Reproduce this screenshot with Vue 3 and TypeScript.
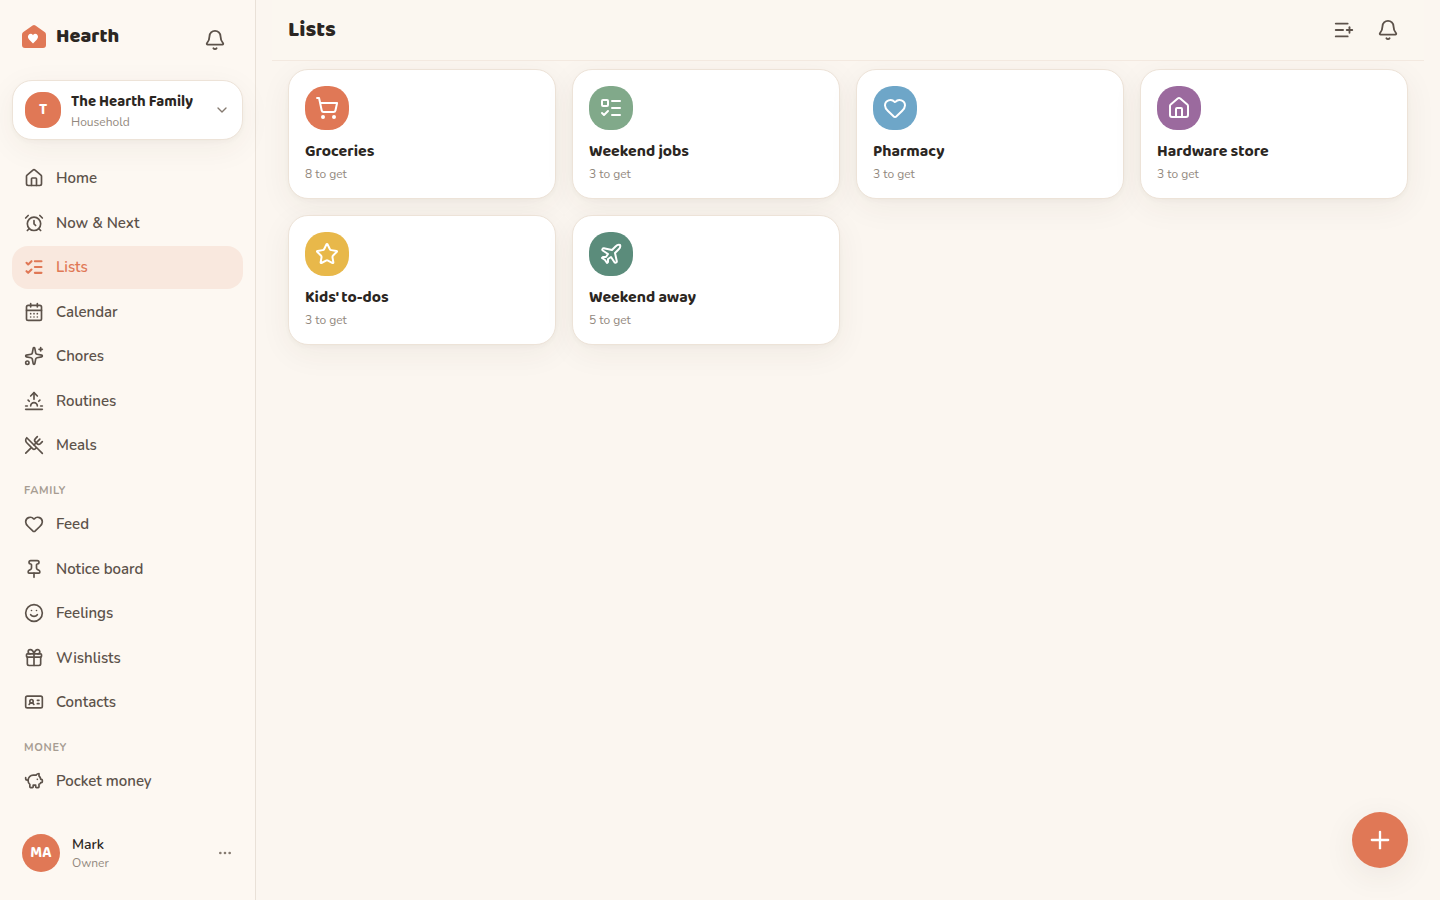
<script setup lang="ts">
import { h, type FunctionalComponent } from 'vue'

type Shape = string | { circle: [number, number, number] } | { rect: [number, number, number, number, number] }

const HEART =
  'M2 9.5a5.5 5.5 0 0 1 9.591-3.676.56.56 0 0 0 .818 0A5.49 5.49 0 0 1 22 9.5c0 2.29-1.5 4-3 5.5l-5.492 5.313a2 2 0 0 1-3 .019L5 15c-1.5-1.5-3-3.2-3-5.5'

const icons: Record<string, Shape[]> = {
  home: [
    'M15 21v-8a1 1 0 0 0-1-1h-4a1 1 0 0 0-1 1v8',
    'M3 10a2 2 0 0 1 .709-1.528l7-6a2 2 0 0 1 2.582 0l7 6A2 2 0 0 1 21 10v9a2 2 0 0 1-2 2H5a2 2 0 0 1-2-2z',
  ],
  alarm: [
    { circle: [12, 13, 8] },
    'M12 9v4l2 2',
    'M5 3 2 6',
    'm22 6-3-3',
    'M6.38 18.7 4 21',
    'M17.64 18.67 20 21',
  ],
  checks: ['M13 5h8', 'M13 12h8', 'M13 19h8', 'm3 17 2 2 4-4', 'm3 7 2 2 4-4'],
  todo: ['M13 5h8', 'M13 12h8', 'M13 19h8', 'm3 17 2 2 4-4', { rect: [3, 4, 6, 6, 1] }],
  calendar: [
    'M8 2v4',
    'M16 2v4',
    { rect: [3, 4, 18, 18, 2] },
    'M3 10h18',
    'M8 14h.01',
    'M12 14h.01',
    'M16 14h.01',
    'M8 18h.01',
    'M12 18h.01',
    'M16 18h.01',
  ],
  sparkles: [
    'M11.017 2.814a1 1 0 0 1 1.966 0l1.051 5.558a2 2 0 0 0 1.594 1.594l5.558 1.051a1 1 0 0 1 0 1.966l-5.558 1.051a2 2 0 0 0-1.594 1.594l-1.051 5.558a1 1 0 0 1-1.966 0l-1.051-5.558a2 2 0 0 0-1.594-1.594l-5.558-1.051a1 1 0 0 1 0-1.966l5.558-1.051a2 2 0 0 0 1.594-1.594z',
    'M20 2v4',
    'M22 4h-4',
    { circle: [4, 20, 2] },
  ],
  sunrise: [
    'M12 2v8',
    'm4.93 10.93 1.41 1.41',
    'M2 18h2',
    'M20 18h2',
    'm19.07 10.93-1.41 1.41',
    'M22 22H2',
    'm8 6 4-4 4 4',
    'M16 18a4 4 0 0 0-8 0',
  ],
  utensils: [
    'm16 2-2.3 2.3a3 3 0 0 0 0 4.2l1.8 1.8a3 3 0 0 0 4.2 0L22 8',
    'M15 15 3.3 3.3a4.2 4.2 0 0 0 0 6l7.3 7.3c.7.7 2 .7 2.8 0L15 15Zm0 0 7 7',
    'm2.1 21.8 6.4-6.3',
    'm19 5-7 7',
  ],
  heart: [HEART],
  pin: [
    'M12 17v5',
    'M9 10.76a2 2 0 0 1-1.11 1.79l-1.78.9A2 2 0 0 0 5 15.24V16a1 1 0 0 0 1 1h12a1 1 0 0 0 1-1v-.76a2 2 0 0 0-1.11-1.79l-1.78-.9A2 2 0 0 1 15 10.76V7a1 1 0 0 1 1-1 2 2 0 0 0 0-4H8a2 2 0 0 0 0 4 1 1 0 0 1 1 1z',
  ],
  smile: [{ circle: [12, 12, 10] }, 'M8 14s1.5 2 4 2 4-2 4-2', 'M9 9h.01', 'M15 9h.01'],
  gift: [
    'M12 7v14',
    'M20 11v8a2 2 0 0 1-2 2H6a2 2 0 0 1-2-2v-8',
    'M7.5 7a1 1 0 0 1 0-5A4.8 8 0 0 1 12 7a4.8 8 0 0 1 4.5-5 1 1 0 0 1 0 5',
    { rect: [3, 7, 18, 4, 1] },
  ],
  idCard: [
    'M16 10h2',
    'M16 14h2',
    'M6.17 15a3 3 0 0 1 5.66 0',
    { circle: [9, 11, 2] },
    { rect: [2, 5, 20, 14, 2] },
  ],
  piggy: [
    'M11 17h3v2a1 1 0 0 0 1 1h2a1 1 0 0 0 1-1v-3a3.16 3.16 0 0 0 2-2h1a1 1 0 0 0 1-1v-2a1 1 0 0 0-1-1h-1a5 5 0 0 0-2-4V3a4 4 0 0 0-3.2 1.6l-.3.4H11a6 6 0 0 0-6 6v1a5 5 0 0 0 2 4v3a1 1 0 0 0 1 1h2a1 1 0 0 0 1-1z',
    'M16 10h.01',
    'M2 8v1a2 2 0 0 0 2 2h1',
  ],
  bell: [
    'M10.268 21a2 2 0 0 0 3.464 0',
    'M3.262 15.326A1 1 0 0 0 4 17h16a1 1 0 0 0 .74-1.673C19.41 13.956 18 12.499 18 8A6 6 0 0 0 6 8c0 4.499-1.411 5.956-2.738 7.326',
  ],
  listPlus: ['M16 5H3', 'M11 12H3', 'M16 19H3', 'M18 9v6', 'M21 12h-6'],
  chevron: ['m6 9 6 6 6-6'],
  dots: [{ circle: [5, 12, 1] }, { circle: [12, 12, 1] }, { circle: [19, 12, 1] }],
  plus: ['M5 12h14', 'M12 5v14'],
  cart: [
    { circle: [8, 21, 1] },
    { circle: [19, 21, 1] },
    'M2.05 2.05h2l2.66 12.42a2 2 0 0 0 2 1.58h9.78a2 2 0 0 0 1.95-1.57l1.65-7.43H5.12',
  ],
  star: [
    'M11.525 2.295a.53.53 0 0 1 .95 0l2.31 4.679a2.123 2.123 0 0 0 1.595 1.16l5.166.756a.53.53 0 0 1 .294.904l-3.736 3.638a2.123 2.123 0 0 0-.611 1.878l.882 5.14a.53.53 0 0 1-.771.56l-4.618-2.428a2.122 2.122 0 0 0-1.973 0L6.396 21.01a.53.53 0 0 1-.77-.56l.881-5.139a2.122 2.122 0 0 0-.611-1.879L2.16 9.795a.53.53 0 0 1 .294-.906l5.165-.755a2.122 2.122 0 0 0 1.597-1.16z',
  ],
  plane: [
    'M17.8 19.2 16 11l3.5-3.5C21 6 21.5 4 21 3c-1-.5-3 0-4.5 1.5L13 8 4.8 6.2c-.5-.1-.9.1-1.1.5l-.3.5c-.2.5-.1 1 .3 1.3L9 12l-2 3H4l-1 1 3 2 2 3 1-1v-3l3-2 3.5 5.3c.3.4.8.5 1.3.3l.5-.2c.4-.3.6-.7.5-1.2z',
  ],
}

const Icon: FunctionalComponent<{ name: string; size: number; weight?: number }> = (props) =>
  h(
    'svg',
    {
      width: props.size,
      height: props.size,
      viewBox: '0 0 24 24',
      fill: 'none',
      stroke: 'currentColor',
      'stroke-width': props.weight ?? 2,
      'stroke-linecap': 'round',
      'stroke-linejoin': 'round',
      'aria-hidden': 'true',
    },
    icons[props.name].map((s) => {
      if (typeof s === 'string') return h('path', { d: s })
      if ('circle' in s) return h('circle', { cx: s.circle[0], cy: s.circle[1], r: s.circle[2] })
      return h('rect', { x: s.rect[0], y: s.rect[1], width: s.rect[2], height: s.rect[3], rx: s.rect[4] })
    }),
  )
Icon.props = ['name', 'size', 'weight']

interface NavItem {
  label: string
  icon: string
  active?: boolean
}

const sections: { title?: string; items: NavItem[] }[] = [
  {
    items: [
      { label: 'Home', icon: 'home' },
      { label: 'Now & Next', icon: 'alarm' },
      { label: 'Lists', icon: 'checks', active: true },
      { label: 'Calendar', icon: 'calendar' },
      { label: 'Chores', icon: 'sparkles' },
      { label: 'Routines', icon: 'sunrise' },
      { label: 'Meals', icon: 'utensils' },
    ],
  },
  {
    title: 'Family',
    items: [
      { label: 'Feed', icon: 'heart' },
      { label: 'Notice board', icon: 'pin' },
      { label: 'Feelings', icon: 'smile' },
      { label: 'Wishlists', icon: 'gift' },
      { label: 'Contacts', icon: 'idCard' },
    ],
  },
  { title: 'Money', items: [{ label: 'Pocket money', icon: 'piggy' }] },
]

const lists = [
  { name: 'Groceries', count: 8, icon: 'cart', tone: 'coral' },
  { name: 'Weekend jobs', count: 3, icon: 'todo', tone: 'sage' },
  { name: 'Pharmacy', count: 3, icon: 'heart', tone: 'sky' },
  { name: 'Hardware store', count: 3, icon: 'home', tone: 'plum' },
  { name: "Kids' to-dos", count: 3, icon: 'star', tone: 'honey' },
  { name: 'Weekend away', count: 5, icon: 'plane', tone: 'pine' },
]
</script>

<template>
  <div class="app">
    <aside class="sidebar">
      <div class="brand-row">
        <a class="brand" href="#">
          <svg class="logo" width="28" height="28" viewBox="0 0 28 28" aria-hidden="true">
            <path
              class="logo-house"
              d="M12.6 3.5a2.2 2.2 0 0 1 2.8 0l9.2 6.6A3.2 3.2 0 0 1 26 12.7V23a3 3 0 0 1-3 3H5a3 3 0 0 1-3-3V12.7a3.2 3.2 0 0 1 1.4-2.6z"
            />
            <path
              class="logo-heart"
              d="M13 21.5l-3.7-3.8c-2.8-2.9-.6-6.2 1.7-5.9 1 .1 1.600.7 2 1.4.4-.7 1-1.3 2-1.4 2.300-.3 4.500 3 1.700 5.900z"
            />
          </svg>
          <span class="brand-name">Hearth</span>
        </a>
        <button class="icon-btn" type="button" aria-label="Notifications"><Icon name="bell" :size="22" /></button>
      </div>

      <button class="household" type="button">
        <span class="household-mark">T</span>
        <span class="who">
          <span class="household-name">The Hearth Family</span>
          <span class="caption">Household</span>
        </span>
        <Icon class="muted" name="chevron" :size="16" />
      </button>

      <nav class="nav">
        <template v-for="(section, i) in sections" :key="i">
          <h2 v-if="section.title" class="nav-title">{{ section.title }}</h2>
          <a
            v-for="item in section.items"
            :key="item.label"
            class="nav-item"
            :class="{ active: item.active }"
            :aria-current="item.active ? 'page' : undefined"
            href="#"
          >
            <Icon :name="item.icon" :size="20" :weight="item.active ? 2.5 : 2" />
            <span>{{ item.label }}</span>
          </a>
        </template>
      </nav>

      <button class="account" type="button">
        <span class="avatar">MA</span>
        <span class="who">
          <span class="account-name">Mark</span>
          <span class="caption">Owner</span>
        </span>
        <Icon class="muted" name="dots" :size="16" />
      </button>
    </aside>

    <main class="main">
      <header class="topbar">
        <h1 class="title">Lists</h1>
        <div class="actions">
          <button class="icon-btn" type="button" aria-label="New list"><Icon name="listPlus" :size="22" /></button>
          <button class="icon-btn" type="button" aria-label="Notifications"><Icon name="bell" :size="22" /></button>
        </div>
      </header>

      <section class="grid">
        <a v-for="list in lists" :key="list.name" class="card" href="#">
          <span class="badge" :class="list.tone"><Icon :name="list.icon" :size="24" /></span>
          <span class="card-name">{{ list.name }}</span>
          <span class="caption">{{ list.count }} to get</span>
        </a>
      </section>

      <button class="fab" type="button" aria-label="Add"><Icon name="plus" :size="28" /></button>
    </main>
  </div>
</template>

<style>
body {
  background: #fbf6f0;
}
</style>

<style scoped>
.app {
  --ink: #2b2622;
  --soft: #5c524a;
  --muted: #92887e;
  --line: #ede3d8;
  --coral: #e07856;
  --shadow: 0 2px 4px rgba(60, 48, 38, 0.03), 0 8px 32px rgba(60, 48, 38, 0.06);
  --display: 'Baloo 2', Nunito, 'Noto Sans', sans-serif;
  display: flex;
  height: 100vh;
  color: var(--ink);
  background: #fbf6f0;
  font-family: Nunito, 'Noto Sans', sans-serif;
  font-size: 16px;
}

.app *,
.app *::before {
  box-sizing: border-box;
}

button {
  padding: 0;
  border: 0;
  background: none;
  color: inherit;
  font: inherit;
  text-align: left;
  cursor: pointer;
}

a {
  color: inherit;
  text-decoration: none;
}

svg {
  flex: none;
}

.muted {
  color: #857a70;
}

.caption {
  color: var(--muted);
  font-size: 12px;
  line-height: 16px;
}

/* Sidebar */
.sidebar {
  display: flex;
  flex: none;
  flex-direction: column;
  width: 256px;
  padding: 20px 12px;
  border-right: 1px solid #e9e1d8;
  background: #fdf8f2;
}

.brand-row {
  display: flex;
  align-items: flex-start;
  justify-content: space-between;
  margin-bottom: 20px;
  padding: 0 8px;
}

.brand {
  display: flex;
  gap: 8px;
  align-items: center;
  height: 32px;
}

.logo-house {
  fill: var(--coral);
}

.logo-heart {
  fill: #fff;
}

.brand-name,
.title {
  font-family: var(--display);
  font-weight: 800;
  line-height: 32px;
}

.brand-name {
  font-size: 20px;
}

.icon-btn {
  display: grid;
  place-items: center;
  width: 40px;
  height: 40px;
  border-radius: 20px;
  color: var(--soft);
}

.household {
  display: flex;
  flex: none;
  gap: 10px;
  align-items: center;
  height: 60px;
  padding: 0 12px;
  border: 1px solid var(--line);
  border-radius: 20px;
  background: #fff;
  box-shadow: var(--shadow);
}

.household-mark,
.avatar {
  display: grid;
  flex: none;
  place-items: center;
  background: var(--coral);
  color: #fff;
  font-weight: 700;
  font-size: 15px;
  font-family: var(--display);
}

.household-mark {
  width: 36px;
  height: 36px;
  border-radius: 16px;
}

.who {
  display: flex;
  flex: 1;
  flex-direction: column;
  min-width: 0;
}

.household-name {
  font-family: var(--display);
  font-weight: 700;
  font-size: 15px;
  line-height: 24px;
}

.nav {
  display: flex;
  flex: 1;
  flex-direction: column;
  gap: 2px;
  min-height: 0;
  margin-top: 17px;
  overflow: hidden;
}

.nav-item {
  display: flex;
  flex: none;
  gap: 12px;
  align-items: center;
  padding: 10px 12px;
  border-radius: 16px;
  color: var(--soft);
  font-weight: 600;
  font-size: 15px;
  line-height: 1.5;
}

.nav-item.active {
  background: #f9e8de;
  color: var(--coral);
}

.nav-title {
  flex: none;
  margin: 0;
  padding: 14px 12px 2px;
  color: #a79d93;
  font-weight: 700;
  font-size: 11px;
  line-height: 1.5;
  letter-spacing: 0.06em;
  text-transform: uppercase;
}

.account {
  display: flex;
  flex: none;
  gap: 12px;
  align-items: center;
  margin: 16px 0 8px;
  padding: 0 10px;
}

.avatar {
  width: 38px;
  height: 38px;
  border-radius: 50%;
}

.account-name {
  font-weight: 600;
  font-size: 14px;
  line-height: 20px;
}

/* Content */
.main {
  flex: 1;
  min-width: 0;
  padding: 0 16px;
  overflow-y: auto;
}

.topbar {
  position: sticky;
  top: 0;
  z-index: 1;
  display: flex;
  align-items: center;
  justify-content: space-between;
  height: 61px;
  padding: 0 16px;
  border-bottom: 1px solid #f3e9e0;
  background: #fbf7f0;
}

.title {
  margin: 0;
  font-size: 22px;
}

.actions {
  display: flex;
  gap: 4px;
}

.grid {
  display: grid;
  grid-template-columns: repeat(4, minmax(0, 1fr));
  gap: 16px;
  padding: 8px 16px 32px;
}

.card {
  display: flex;
  flex-direction: column;
  padding: 16px;
  border: 1px solid var(--line);
  border-radius: 20px;
  background: #fff;
  box-shadow: var(--shadow);
}

.badge {
  display: grid;
  place-items: center;
  width: 44px;
  height: 44px;
  margin-bottom: 10px;
  border-radius: 20px;
  color: #fff;
}

.coral {
  background: #e07856;
}

.sage {
  background: #81a98a;
}

.sky {
  background: #6ea6c8;
}

.plum {
  background: #9b6a9e;
}

.honey {
  background: #e8b84a;
}

.pine {
  background: #5b8c7b;
}

.card-name {
  margin-bottom: 2px;
  font-family: var(--display);
  font-weight: 700;
  font-size: 16px;
  line-height: 24px;
}

.fab {
  position: fixed;
  right: 32px;
  bottom: 32px;
  display: grid;
  place-items: center;
  width: 56px;
  height: 56px;
  border-radius: 50%;
  background: var(--coral);
  box-shadow: 0 8px 32px rgba(60, 48, 38, 0.08);
  color: #fff;
}
</style>
